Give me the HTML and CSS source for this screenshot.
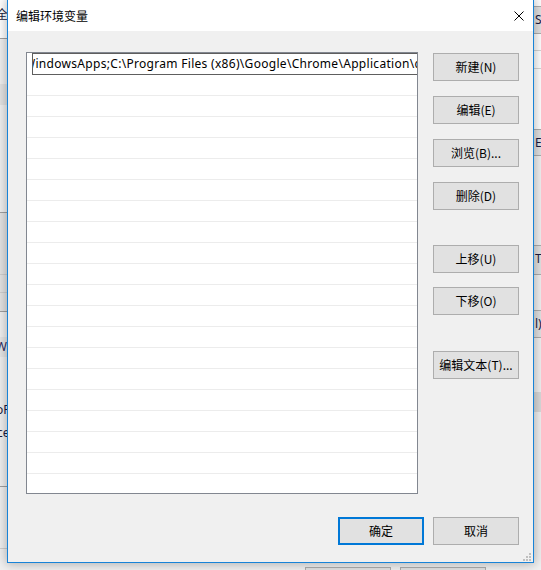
FILE: index.html
```html
<!DOCTYPE html>
<html lang="zh-CN">
<head>
<meta charset="utf-8">
<title>编辑环境变量</title>
<link rel="stylesheet" href="styles.css">
</head>
<body>
<div class="desk">
  <div class="bgwin">
    <div class="frag f-top"><span class="frag-text t1">全</span></div>
    <div class="frag f-line l1"></div>
    <div class="frag f-band b1"></div>
    <div class="frag f-grid"></div>
    <div class="frag f-band2"><span class="frag-text t2">_W</span></div>
    <span class="frag-text t3">oF</span>
    <span class="frag-text t4">ce</span>
    <div class="frag f-line l2"></div>
    <div class="frag f-line l3"></div>

    <div class="frag r-top"></div>
    <div class="frag r-btn rb1"><span class="frag-text rt">S</span></div>
    <div class="frag r-line rl1"></div>
    <div class="frag r-line rl2"></div>
    <div class="frag r-btn rb2"><span class="frag-text rt">E</span></div>
    <div class="frag r-btn rb3"><span class="frag-text rt">T</span></div>
    <div class="frag r-btn rb4"><span class="frag-text rt">l)</span></div>
    <div class="frag r-dark"></div>

    <div class="frag bt-btn bb1"></div>
    <div class="frag bt-btn bb2"></div>
  </div>

  <div class="dialog">
    <div class="titlebar">
      <span class="title">编辑环境变量</span>
      <svg class="close" width="10" height="10" viewBox="0 0 10 10"><path d="M0.5 0.5 L9.5 9.5 M9.5 0.5 L0.5 9.5" stroke="#000" stroke-width="1" fill="none"/></svg>
    </div>
    <div class="body">
      <div class="main">
        <div class="list">
          <div class="edit"><span class="edit-text">WindowsApps;C:\Program Files (x86)\Google\Chrome\Application\chrome</span></div>
          <div class="row"></div><div class="row"></div><div class="row"></div><div class="row"></div>
          <div class="row"></div><div class="row"></div><div class="row"></div><div class="row"></div>
          <div class="row"></div><div class="row"></div><div class="row"></div><div class="row"></div>
          <div class="row"></div><div class="row"></div><div class="row"></div><div class="row"></div>
          <div class="row"></div><div class="row"></div><div class="row"></div><div class="row"></div>
        </div>
        <div class="side">
          <div class="group g1">
            <button class="btn">新建(N)</button>
            <button class="btn">编辑(E)</button>
            <button class="btn">浏览(B)...</button>
            <button class="btn">删除(D)</button>
          </div>
          <div class="group g2">
            <button class="btn">上移(U)</button>
            <button class="btn">下移(O)</button>
          </div>
          <div class="group g3">
            <button class="btn">编辑文本(T)...</button>
          </div>
        </div>
      </div>
      <div class="footer">
        <button class="btn default">确定</button>
        <button class="btn">取消</button>
      </div>
    </div>
    <svg class="grip" width="8" height="8" viewBox="0 0 8 8">
      <rect x="6" y="0" width="2" height="2" fill="#bfbfbf"/>
      <rect x="3" y="3" width="2" height="2" fill="#bfbfbf"/>
      <rect x="6" y="3" width="2" height="2" fill="#bfbfbf"/>
      <rect x="0" y="6" width="2" height="2" fill="#bfbfbf"/>
      <rect x="3" y="6" width="2" height="2" fill="#bfbfbf"/>
      <rect x="6" y="6" width="2" height="2" fill="#bfbfbf"/>
    </svg>
  </div>
</div>
</body>
</html>
```

FILE: styles.css
```css
* { box-sizing: border-box; }
html, body { margin: 0; padding: 0; }
body {
  width: 541px;
  height: 570px;
  overflow: hidden;
  font-family: "Noto Sans CJK SC", "Noto Sans", sans-serif;
  font-size: 12px;
  color: #000;
}
.desk {
  position: relative;
  width: 541px;
  height: 570px;
  background: #f0f0f0;
  overflow: hidden;
}

/* background window fragments (free canvas) */
.bgwin { position: absolute; inset: 0; }
.frag { position: absolute; }
.frag-text {
  position: absolute;
  font-family: "Noto Sans", sans-serif;
  font-size: 12px;
  line-height: 14px;
  color: #1a1a40;
  white-space: nowrap;
}
.f-top { left: 0; top: 0; width: 10px; height: 38px; background: #fff; }
.t1 { right: 2px; top: 7px; font-family: "Noto Sans CJK SC", sans-serif; }
.f-line { left: 0; width: 10px; height: 1px; background: #a0a0a0; }
.l1 { top: 38px; }
.l2 { top: 486px; }
.l3 { top: 548px; background: #cfcfcf; }
.f-band { left: 0; width: 10px; }
.b1 { top: 84px; height: 21px; background: #e3e3e3; }
.f-grid {
  left: 0; top: 212px; width: 10px; height: 100px;
  background: #e3e3e3;
  border-top: 1px solid #a0a0a0;
  border-bottom: 1px solid #a0a0a0;
  background-image: linear-gradient(#cfcfcf, #cfcfcf), linear-gradient(#cfcfcf, #cfcfcf);
  background-size: 100% 1px, 100% 1px;
  background-position: 0 61px, 0 79px;
  background-repeat: no-repeat;
}
.f-band2 { left: 0; top: 337px; width: 10px; height: 20px; background: #e6e6e6; }
.t2 { right: 3px; top: 3px; color: #2a2a60; }
.t3 { left: -4px; top: 403px; }
.t4 { left: -3px; top: 426px; }

.r-top { left: 530px; top: 0; width: 11px; height: 150px; background: #fff; }
.r-btn { left: 530px; width: 14px; background: #e1e1e1; border: 1px solid #adadad; }
.rb1 { top: 6px; height: 28px; }
.rb2 { top: 129px; height: 27px; }
.rb3 { top: 245px; height: 30px; }
.rb4 { top: 310px; height: 28px; }
.rt { left: 4px; top: 6px; }
.r-line { left: 530px; width: 11px; height: 1px; background: #d5d5d5; }
.rl1 { top: 50px; }
.rl2 { top: 68px; }
.r-dark { left: 530px; top: 392px; width: 11px; height: 20px; background: #d9d9d9; }

.bt-btn { top: 567px; height: 10px; background: #e1e1e1; border: 1px solid #adadad; }
.bb1 { left: 305px; width: 86px; }
.bb2 { left: 400px; width: 86px; }

/* dialog window */
.dialog {
  position: absolute;
  left: 7px;
  top: -1px;
  width: 527px;
  height: 564px;
  border: 1px solid #1883d7;
  background: #f0f0f0;
  box-shadow: 0 0 10px 1px rgba(0, 0, 0, 0.28);
  display: flex;
  flex-direction: column;
}
.titlebar {
  height: 31px;
  background: #fff;
  display: flex;
  align-items: center;
  padding-left: 8px;
  flex: none;
}
.title {
  flex: 1;
  font-size: 12px;
  line-height: 16px;
  color: #000;
}
.close { margin-right: 9px; display: block; flex: none; }

.body {
  flex: 1;
  display: flex;
  flex-direction: column;
  padding: 21px 14px 17px 18px;
}
.main {
  display: flex;
  gap: 15px;
}
.list {
  width: 392px;
  height: 442px;
  border: 1px solid #828790;
  background: #fff;
  overflow: hidden;
  display: flex;
  flex-direction: column;
}
.edit {
  flex: none;
  height: 22px;
  margin-left: 5px;
  margin-right: -1px;
  border: 1px solid #5e5e5e;
  background: #fff;
  overflow: hidden;
  white-space: nowrap;
  padding-left: 2px;
}
.edit-text {
  display: block;
  margin-left: -11px;
  font-family: "Noto Sans", sans-serif;
  font-size: 12px;
  line-height: 19px;
  letter-spacing: 0.3px;
  color: #000;
}
.row {
  flex: none;
  height: 21px;
  border-bottom: 1px solid #ececec;
}

.side {
  width: 86px;
  padding-top: 1px;
  display: flex;
  flex-direction: column;
}
.group { display: flex; flex-direction: column; }
.g1 { gap: 15px; }
.g2 { gap: 14px; margin-top: 35px; }
.g3 { margin-top: 36px; }

.btn {
  width: 86px;
  height: 28px;
  margin: 0;
  padding: 0;
  background: #e1e1e1;
  border: 1px solid #adadad;
  font-family: "Noto Sans CJK SC", "Noto Sans", sans-serif;
  font-size: 12px;
  line-height: 16px;
  color: #000;
  text-align: center;
}
.btn.default { border: 2px solid #0078d7; }

.footer {
  margin-top: 23px;
  display: flex;
  justify-content: flex-end;
  gap: 9px;
}

.grip {
  position: absolute;
  right: 2px;
  bottom: 1px;
  display: block;
}
```
